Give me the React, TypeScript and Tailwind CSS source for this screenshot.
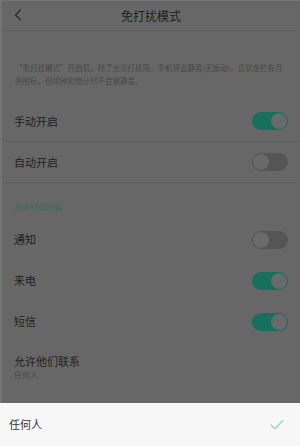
import { ChevronLeft, Check } from 'lucide-react';

function Toggle({ on }: { on: boolean }) {
  return (
    <div
      className={`flex h-[18px] w-[36px] items-center rounded-full p-[1px] ${
        on ? 'justify-end bg-[#15705e]' : 'justify-start bg-[#555555]'
      }`}
    >
      <div className="h-[16px] w-[16px] rounded-full bg-[#6a6a6a]" />
    </div>
  );
}

function SwitchRow({ label, on, divider }: { label: string; on: boolean; divider?: boolean }) {
  return (
    <div
      className={`flex h-[41px] items-center justify-between pl-[12px] pr-[12px] ${
        divider ? 'border-b border-[#5f5f5f]' : ''
      }`}
    >
      <span className="text-[11px] text-[#222222]">{label}</span>
      <Toggle on={on} />
    </div>
  );
}

export default function App() {
  return (
    <div
      className="flex h-[446px] w-[300px] flex-col bg-[#676767]"
      style={{ fontFamily: '"Noto Sans CJK SC", "Noto Sans", sans-serif' }}
    >
      <div className="flex flex-1 flex-col border-l-2 border-t border-[#747474]">
        {/* Header */}
        <div className="relative flex h-[30px] items-center justify-center border-b border-[#5e5e5e]">
          <ChevronLeft className="absolute left-[6px] top-[4px] h-[20px] w-[20px] text-[#2a2a2a]" strokeWidth={1.5} />
          <h1 className="text-[12px] text-[#1f1f1f]">免打扰模式</h1>
        </div>

        {/* Description */}
        <p className="px-[13px] pt-[30px] pb-[14px] text-[7.5px] leading-[13px] text-[#474747]">
          “免打扰模式”开启后，除了允许打扰项，手机将会静音(无振动)，且状态栏有月亮图标。但闹钟和倒计时不会被静音。
        </p>

        <SwitchRow label="手动开启" on divider />
        <SwitchRow label="自动开启" on={false} divider />

        <div className="px-[12px] pt-[19px] pb-[7px] text-[8px] leading-[10px] text-[#2d6e5f]">允许打扰内容</div>

        <SwitchRow label="通知" on={false} />
        <SwitchRow label="来电" on />
        <SwitchRow label="短信" on />

        <div className="flex flex-col px-[12px] pt-[12px]">
          <span className="text-[11px] leading-[15px] text-[#222222]">允许他们联系</span>
          <span className="text-[8px] leading-[12px] text-[#4a4a4a]">任何人</span>
        </div>
      </div>

      {/* Bottom sheet */}
      <div className="flex h-[43px] items-center justify-between bg-[#f7f7f7] pl-[9px] pr-[14px]">
        <span className="text-[11px] text-[#333333]">任何人</span>
        <Check className="h-[18px] w-[18px] text-[#8fcfc0]" strokeWidth={1.5} />
      </div>
    </div>
  );
}
